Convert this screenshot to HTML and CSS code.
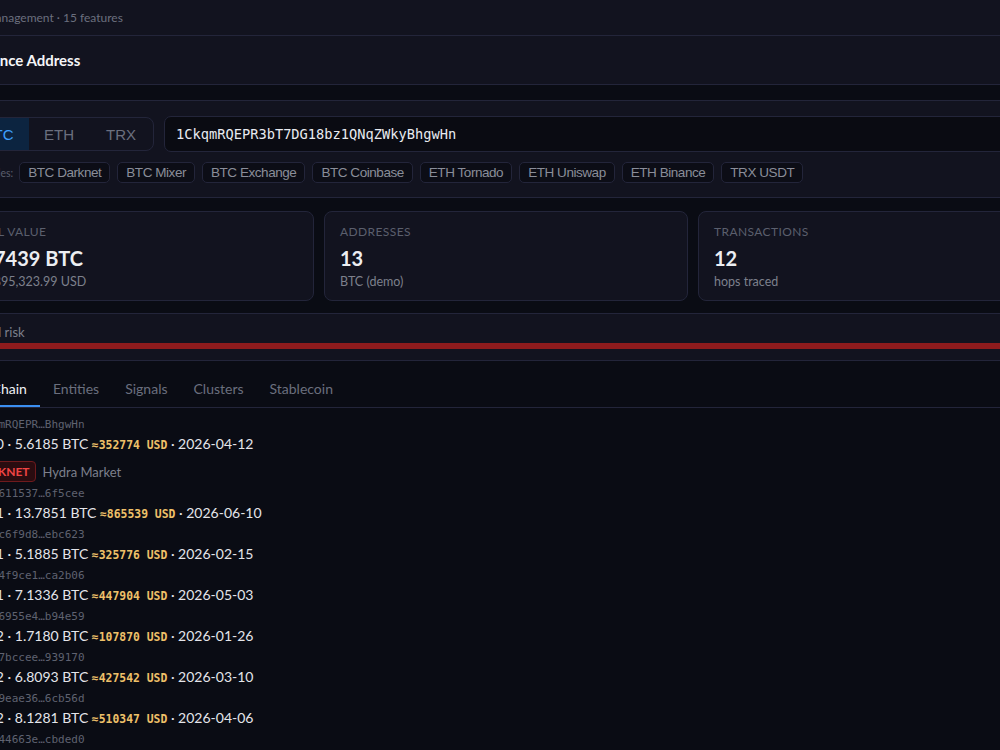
FILE: index.html
```
<!DOCTYPE html>
<html lang="en">
<head>
<meta charset="utf-8">
<title>Balance Address</title>
<link rel="stylesheet" href="styles.css">
</head>
<body>
<div class="page">
  <header class="topbar">
    <span class="crumb">Case Management · 15 features</span>
  </header>
  <div class="titlebar">
    <h1>Balance Address</h1>
  </div>

  <main class="content">
    <section class="panel search">
      <div class="search-row">
        <div class="chains">
          <button class="on">BTC</button>
          <button>ETH</button>
          <button>TRX</button>
        </div>
        <input class="addr-input" type="text" value="1CkqmRQEPR3bT7DG18bz1QNqZWkyBhgwHn">
      </div>
      <div class="examples">
        <span class="ex-label">Examples:</span>
        <button class="chip">BTC Darknet</button>
        <button class="chip">BTC Mixer</button>
        <button class="chip">BTC Exchange</button>
        <button class="chip">BTC Coinbase</button>
        <button class="chip">ETH Tornado</button>
        <button class="chip">ETH Uniswap</button>
        <button class="chip">ETH Binance</button>
        <button class="chip">TRX USDT</button>
      </div>
    </section>

    <div class="stats">
      <div class="stat">
        <div class="stat-label">Total value</div>
        <div class="stat-value">62.7439 BTC</div>
        <div class="stat-sub">≈ $3,895,323.99 USD</div>
      </div>
      <div class="stat">
        <div class="stat-label">Addresses</div>
        <div class="stat-value">13</div>
        <div class="stat-sub">BTC (demo)</div>
      </div>
      <div class="stat">
        <div class="stat-label">Transactions</div>
        <div class="stat-value">12</div>
        <div class="stat-sub">hops traced</div>
      </div>
    </div>

    <section class="panel risk">
      <div class="risk-label">Critical risk</div>
      <div class="risk-bar"><div class="risk-fill" style="width:100%"></div></div>
    </section>

    <ul class="tabs">
      <li class="active">Tx Chain</li>
      <li>Entities</li>
      <li>Signals</li>
      <li>Clusters</li>
      <li>Stablecoin</li>
    </ul>

    <ul class="hops">
      <li>
        <div class="hash">1CkqmRQEPR…BhgwHn</div>
        <div class="line">Hop 0 · 5.6185 BTC <span class="usd">≈352774 USD</span> · 2026-04-12</div>
        <div class="entity"><span class="tag">DARKNET</span><span class="ent-name">Hydra Market</span></div>
      </li>
      <li>
        <div class="hash">b7e3611537…6f5cee</div>
        <div class="line">Hop 1 · 13.7851 BTC <span class="usd">≈865539 USD</span> · 2026-06-10</div>
      </li>
      <li>
        <div class="hash">04a1c6f9d8…ebc623</div>
        <div class="line">Hop 1 · 5.1885 BTC <span class="usd">≈325776 USD</span> · 2026-02-15</div>
      </li>
      <li>
        <div class="hash">e9d24f9ce1…ca2b06</div>
        <div class="line">Hop 1 · 7.1336 BTC <span class="usd">≈447904 USD</span> · 2026-05-03</div>
      </li>
      <li>
        <div class="hash">5c0b6955e4…b94e59</div>
        <div class="line">Hop 2 · 1.7180 BTC <span class="usd">≈107870 USD</span> · 2026-01-26</div>
      </li>
      <li>
        <div class="hash">a8f07bccee…939170</div>
        <div class="line">Hop 2 · 6.8093 BTC <span class="usd">≈427542 USD</span> · 2026-03-10</div>
      </li>
      <li>
        <div class="hash">31d79eae36…6cb56d</div>
        <div class="line">Hop 2 · 8.1281 BTC <span class="usd">≈510347 USD</span> · 2026-04-06</div>
      </li>
      <li>
        <div class="hash">f26c44663e…cbded0</div>
        <div class="line">Hop 3 · 2.4410 BTC <span class="usd">≈153265 USD</span> · 2026-05-21</div>
      </li>
    </ul>
  </main>
</div>
</body>
</html>
```

FILE: styles.css
```
*{
	margin:0;
	padding:0;
	box-sizing:border-box;
	}
html,body{
	background:#0a0c14;
	overflow:hidden;
	}
body{
	font-family:Lato,"Noto Sans",sans-serif;
	font-size:14px;
	color:#e4e5ea;
	}
li{
	list-style:none;
	}
.page{
	width:1144px;
	margin-left:-66px;
	}

/* top bars */
.topbar{
	height:36px;
	padding:0 22px;
	background:#12131f;
	border-bottom:1px solid #23253a;
	display:flex;
	align-items:center;
	}
.crumb{
	font-size:12px;
	color:#6b6f7e;
	}
.titlebar{
	height:49px;
	padding:0 37px;
	background:#12131f;
	border-bottom:1px solid #23253a;
	display:flex;
	align-items:center;
	}
.titlebar h1{
	font-size:15px;
	font-weight:700;
	color:#f5f6f8;
	}

.content{
	padding:15px 16px 0;
	}
.panel{
	background:#12131f;
	border:1px solid #23253a;
	border-radius:8px;
	}

/* search */
.search{
	padding:15px 16px 14px;
	}
.search-row{
	display:flex;
	align-items:center;
	gap:10px;
	}
.chains{
	display:flex;
	height:34px;
	border:1px solid #23253a;
	border-radius:8px;
	overflow:hidden;
	}
.chains button{
	width:60px;
	border:0;
	background:transparent;
	font-family:"Liberation Sans",Arial,sans-serif;
	font-size:15px;
	color:#6b6f7e;
	}
.chains button.on{
	width:61px;
	background:#0c2440;
	color:#3ea0ff;
	}
.chains button:last-child{
	width:64px;
	}
.addr-input{
	flex:1;
	height:36px;
	padding:0 11px;
	background:#0a0b12;
	border:1px solid #23253a;
	border-radius:7px;
	font-family:"DejaVu Sans Mono",monospace;
	font-size:13.7px;
	color:#e8eaf0;
	outline:none;
	}
.examples{
	display:flex;
	align-items:center;
	gap:7px;
	margin-top:10px;
	}
.ex-label{
	font-size:10.5px;
	color:#5b5f6d;
	margin-right:-1px;
	}
.chip{
	height:21px;
	padding:0 8px;
	background:#0c0d16;
	border:1px solid #23253a;
	border-radius:5px;
	font-family:"Liberation Sans",Arial,sans-serif;
	font-size:13.5px;
	letter-spacing:-0.45px;
	color:#8a8d99;
	}

/* stats */
.stats{
	display:grid;
	grid-template-columns:repeat(3,1fr);
	gap:10px;
	margin-top:13px;
	}
.stat{
	height:90px;
	padding:12px 15px 9px;
	background:#12131f;
	border:1px solid #23253a;
	border-radius:8px;
	}
.stat-label{
	font-size:12px;
	line-height:16px;
	letter-spacing:0.4px;
	text-transform:uppercase;
	color:#5b5f6d;
	}
.stat-value{
	margin-top:5px;
	font-size:20px;
	line-height:26px;
	font-weight:700;
	color:#eceef2;
	}
.stat-sub{
	margin-top:2px;
	font-size:12.5px;
	line-height:17px;
	color:#7d808c;
	}

/* risk */
.risk{
	margin-top:12px;
	padding:9px 16px 11px 10px;
	border-radius:0;
	}
.risk-label{
	font-size:13px;
	line-height:18px;
	color:#7d808c;
	}
.risk-bar{
	margin:2px 0 0 6px;
	height:6px;
	background:#1b1d2c;
	}
.risk-fill{
	height:6px;
	background:#8e1b1d;
	}

/* tabs */
.tabs{
	display:flex;
	padding:0 11px;
	border-bottom:1px solid #23253a;
	}
.tabs li{
	padding:18px 13px 6px;
	line-height:20px;
	font-size:14px;
	color:#6b6f7e;
	border-bottom:2px solid transparent;
	}
.tabs li.active{
	color:#f0f1f4;
	border-bottom-color:#3b8ff0;
	}

/* hop list */
.hops{
	padding:8px 16px 0;
	}
.hops li{
	margin-bottom:3px;
	}
.hash{
	padding-left:6px;
	font-family:"DejaVu Sans Mono",monospace;
	font-size:11px;
	line-height:17px;
	color:#5f6270;
	}
.line{
	height:21px;
	font-size:14px;
	line-height:21px;
	color:#e4e5ea;
	}
.usd{
	font-family:"DejaVu Sans Mono",monospace;
	font-size:11.4px;
	line-height:1;
	font-weight:700;
	color:#eec069;
	}
.entity{
	display:flex;
	align-items:center;
	gap:6px;
	margin-top:7px;
	height:21px;
	}
.tag{
	padding:0 6px;
	line-height:19px;
	font-size:12px;
	font-weight:700;
	color:#ef4444;
	background:#2a0c10;
	border:1px solid #6e1a1d;
	border-radius:4px;
	}
.ent-name{
	font-size:13px;
	color:#7d808c;
	}
```
